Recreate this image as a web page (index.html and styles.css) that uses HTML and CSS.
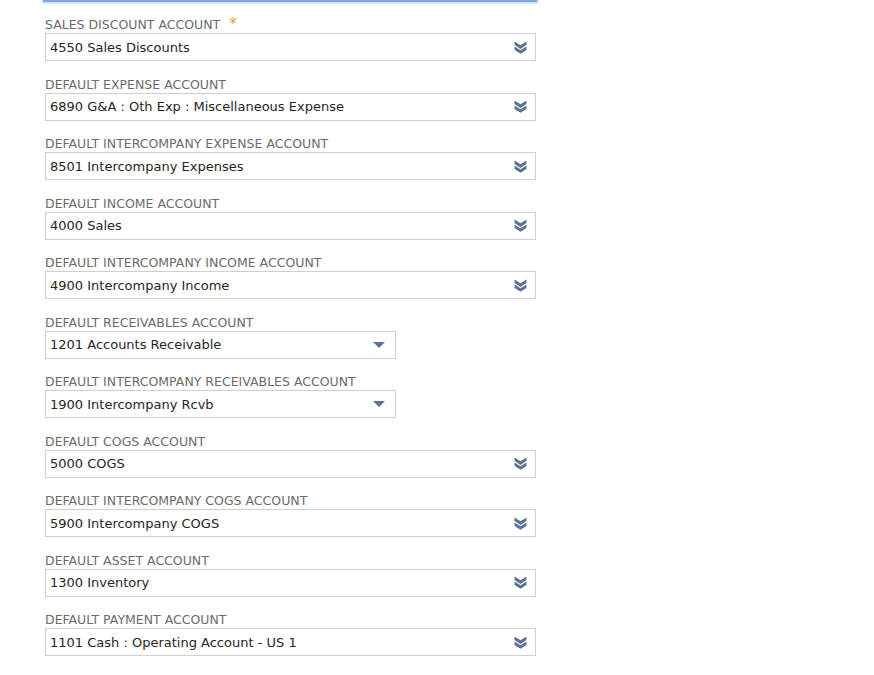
FILE: index.html
```html
<!DOCTYPE html>
<html>
<head>
<meta charset="utf-8">
<link rel="stylesheet" href="styles.css">
</head>
<body>
<div class="form">
  <div class="focus-bar"></div>

  <div class="field">
    <div class="label">SALES DISCOUNT ACCOUNT <span class="req">*</span></div>
    <div class="select wide"><span class="val">4550 Sales Discounts</span><svg class="dbl" viewBox="0 0 12 12"><path d="M0.5 0.5 L6 4 L11.5 0.5 L11.5 3.8 L6 7.3 L0.5 3.8Z M0.5 5 L6 8.5 L11.5 5 L11.5 8.3 L6 11.8 L0.5 8.3Z" /></svg></div>
  </div>

  <div class="field">
    <div class="label">DEFAULT EXPENSE ACCOUNT</div>
    <div class="select wide"><span class="val">6890 G&amp;A : Oth Exp : Miscellaneous Expense</span><svg class="dbl" viewBox="0 0 12 12"><path d="M0.5 0.5 L6 4 L11.5 0.5 L11.5 3.8 L6 7.3 L0.5 3.8Z M0.5 5 L6 8.5 L11.5 5 L11.5 8.3 L6 11.8 L0.5 8.3Z" /></svg></div>
  </div>

  <div class="field">
    <div class="label">DEFAULT INTERCOMPANY EXPENSE ACCOUNT</div>
    <div class="select wide"><span class="val">8501 Intercompany Expenses</span><svg class="dbl" viewBox="0 0 12 12"><path d="M0.5 0.5 L6 4 L11.5 0.5 L11.5 3.8 L6 7.3 L0.5 3.8Z M0.5 5 L6 8.5 L11.5 5 L11.5 8.3 L6 11.8 L0.5 8.3Z" /></svg></div>
  </div>

  <div class="field">
    <div class="label">DEFAULT INCOME ACCOUNT</div>
    <div class="select wide"><span class="val">4000 Sales</span><svg class="dbl" viewBox="0 0 12 12"><path d="M0.5 0.5 L6 4 L11.5 0.5 L11.5 3.8 L6 7.3 L0.5 3.8Z M0.5 5 L6 8.5 L11.5 5 L11.5 8.3 L6 11.8 L0.5 8.3Z" /></svg></div>
  </div>

  <div class="field">
    <div class="label">DEFAULT INTERCOMPANY INCOME ACCOUNT</div>
    <div class="select wide"><span class="val">4900 Intercompany Income</span><svg class="dbl" viewBox="0 0 12 12"><path d="M0.5 0.5 L6 4 L11.5 0.5 L11.5 3.8 L6 7.3 L0.5 3.8Z M0.5 5 L6 8.5 L11.5 5 L11.5 8.3 L6 11.8 L0.5 8.3Z" /></svg></div>
  </div>

  <div class="field">
    <div class="label">DEFAULT RECEIVABLES ACCOUNT</div>
    <div class="select narrow"><span class="val">1201 Accounts Receivable</span><svg class="tri" viewBox="0 0 12 6"><path d="M0 0 L12 0 L6 6Z" /></svg></div>
  </div>

  <div class="field">
    <div class="label">DEFAULT INTERCOMPANY RECEIVABLES ACCOUNT</div>
    <div class="select narrow"><span class="val">1900 Intercompany Rcvb</span><svg class="tri" viewBox="0 0 12 6"><path d="M0 0 L12 0 L6 6Z" /></svg></div>
  </div>

  <div class="field">
    <div class="label">DEFAULT COGS ACCOUNT</div>
    <div class="select wide"><span class="val">5000 COGS</span><svg class="dbl" viewBox="0 0 12 12"><path d="M0.5 0.5 L6 4 L11.5 0.5 L11.5 3.8 L6 7.3 L0.5 3.8Z M0.5 5 L6 8.5 L11.5 5 L11.5 8.3 L6 11.8 L0.5 8.3Z" /></svg></div>
  </div>

  <div class="field">
    <div class="label">DEFAULT INTERCOMPANY COGS ACCOUNT</div>
    <div class="select wide"><span class="val">5900 Intercompany COGS</span><svg class="dbl" viewBox="0 0 12 12"><path d="M0.5 0.5 L6 4 L11.5 0.5 L11.5 3.8 L6 7.3 L0.5 3.8Z M0.5 5 L6 8.5 L11.5 5 L11.5 8.3 L6 11.8 L0.5 8.3Z" /></svg></div>
  </div>

  <div class="field">
    <div class="label">DEFAULT ASSET ACCOUNT</div>
    <div class="select wide"><span class="val">1300 Inventory</span><svg class="dbl" viewBox="0 0 12 12"><path d="M0.5 0.5 L6 4 L11.5 0.5 L11.5 3.8 L6 7.3 L0.5 3.8Z M0.5 5 L6 8.5 L11.5 5 L11.5 8.3 L6 11.8 L0.5 8.3Z" /></svg></div>
  </div>

  <div class="field">
    <div class="label">DEFAULT PAYMENT ACCOUNT</div>
    <div class="select wide"><span class="val">1101 Cash : Operating Account - US 1</span><svg class="dbl" viewBox="0 0 12 12"><path d="M0.5 0.5 L6 4 L11.5 0.5 L11.5 3.8 L6 7.3 L0.5 3.8Z M0.5 5 L6 8.5 L11.5 5 L11.5 8.3 L6 11.8 L0.5 8.3Z" /></svg></div>
  </div>

  <div class="field">
    <div class="label">DEFAULT GAIN/LOSS ACCOUNT</div>
    <div class="select wide"><span class="val">8100 Realized Gain/Loss</span><svg class="dbl" viewBox="0 0 12 12"><path d="M0.5 0.5 L6 4 L11.5 0.5 L11.5 3.8 L6 7.3 L0.5 3.8Z M0.5 5 L6 8.5 L11.5 5 L11.5 8.3 L6 11.8 L0.5 8.3Z" /></svg></div>
  </div>
</div>
</body>
</html>
```

FILE: styles.css
```css
html, body {
  margin: 0;
  padding: 0;
  background: #ffffff;
  overflow: hidden;
}

.form {
  padding-left: 45px;
  font-family: "DejaVu Sans", sans-serif;
}

.focus-bar {
  width: 494px;
  margin-left: -2px;
  height: 2px;
  background: #7ea6e3;
  box-shadow: 0 0 3px 1px #b3ccf2;
  margin-bottom: 11px;
}

.field {
  margin-bottom: 11.5px;
}

.label {
  font-size: 12.5px;
  line-height: 17px;
  padding-top: 3px;
  color: #6b6b6b;
  white-space: nowrap;
}

.req {
  color: #e0a12e;
  margin-left: 5px;
  font-size: 15px;
}

.select {
  box-sizing: border-box;
  height: 28px;
  border: 1px solid #cfcfcf;
  background: #fff;
  display: flex;
  align-items: center;
  padding-left: 4px;
  padding-right: 8px;
}

.select.wide { width: 491px; }
.select.narrow { width: 351px; }

.val {
  flex: 1;
  font-size: 13px;
  color: #262626;
  white-space: nowrap;
}

.dbl {
  width: 13px;
  height: 13px;
  fill: #5d7191;
}

.tri {
  width: 12px;
  height: 6px;
  fill: #5d7191;
  margin-right: 2px;
}
```
